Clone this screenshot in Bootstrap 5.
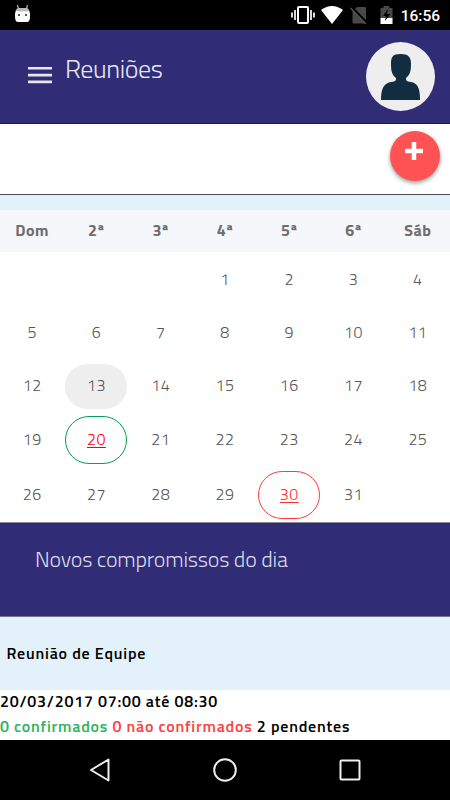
<!DOCTYPE html>
<html lang="pt-BR">
<head>
<meta charset="utf-8">
<meta name="viewport" content="width=device-width, initial-scale=1">
<title>Reuniões</title>
<link href="https://cdn.jsdelivr.net/npm/bootstrap@5.3.0/dist/css/bootstrap.min.css" rel="stylesheet">
<style>
body{font-family:"Titillium Web",Roboto,"Liberation Sans",sans-serif;width:450px;height:800px;overflow:hidden;line-height:1;background:#fff;color:#000}
svg{display:block;flex:none}
.status{height:30px;background:#000;color:#fff;font:500 15.5px/30px Roboto,sans-serif;padding:0 10px 0 14px}
.clock{padding-top:1px}
.topbar{height:94px;background:#302c75;border-bottom:1px solid #18136b;padding:0 15px 0 28px}
.screen-title{font-size:26px;font-weight:300;color:#e6e6f2;margin:0 0 16px 13px;letter-spacing:-.4px}
.avatar{width:69px;height:69px;background:#eee;border-radius:50%}
.tools{height:71px;border-bottom:1px solid #4c484b;padding:7px 10px 0 0}
.add{width:50px;height:50px;padding:0 2px 10px 0;background:#ff5252;border:0;border-radius:50%;box-shadow:0 2px 4px #0006}
.strip{height:15px;background:#e3f2fa}
.week{display:grid;grid-template-columns:repeat(7,1fr);text-align:center;align-items:center;justify-items:center}
.weekdays{height:42px;padding-bottom:2px;background:#f5f7fa;color:#6e6e6e;font-weight:700;font-size:16px;letter-spacing:.5px}
.day{width:62px;height:45px;padding:0 0 2px;display:flex;align-items:center;justify-content:center;font-size:16px;font-weight:300;color:#555;letter-spacing:.5px;border-radius:23px}
.today{background:#eee}
.marked{height:48px;border:1px solid #00a05a;border-radius:24px;color:red;text-decoration:underline;text-underline-offset:2px}
.refused{border-color:#ff3b3b;color:#ff3030}
.h55{height:55px}.h52{height:52px}.h54{height:54px}
.banner{height:95px;background:#302c75;border-top:1px solid #88868f;border-bottom:1px solid #77747d;color:#d9d9ea;padding:25px 0 0 35px;font-size:22px;font-weight:300;letter-spacing:-.2px}
.meeting{height:73px;background:#e3f2fa;padding:0 6.5px 2px;font-size:16px;font-weight:600;letter-spacing:.8px}
.details{height:50px;font-size:16px;line-height:25px;font-weight:600;letter-spacing:.78px;white-space:nowrap}
.when,.answers{height:25px;line-height:23px}
.yes{color:#30b35a}.no{color:#ff4040}
.navkeys{height:60px;background:#000;padding:0 88px}
</style>
<script src="https://cdn.jsdelivr.net/npm/bootstrap@5.3.0/dist/js/bootstrap.bundle.min.js"></script>
</head>
<body class="d-flex flex-column">
<div class="status d-flex align-items-center">
  <svg width="17" height="20" viewBox="0 0 17 20"><path d="M3.500 0l1.500 6M13.500 0l-1.500 6" stroke="#aaa" stroke-width="1.300"/><path d="M2 5h13q1 2 1 6 0 6-3 6H4q-3 0-3-6 0-4 1-6z" fill="#fff"/><path d="M2 6q0-3 3-3h7q3 0 3 3-6 1-13 0z" fill="#bbb"/><path d="M4 9h2v2H4zM11 9h2v2h-2z" fill="#555"/></svg>
  <svg class="ms-auto" width="24" height="20" viewBox="0 0 24 20"><rect x="7" y="2" width="10" height="16" rx="1" fill="none" stroke="#fff" stroke-width="2"/><path d="M4 5v10M20 5v10M1 7.500v5M23 7.500v5" stroke="#fff" stroke-width="1.700"/></svg>
  <svg class="ms-1" width="26" height="20" viewBox="0 0 26 20"><path d="M2 5Q13-3 24 5L13 19z" fill="#fff"/></svg>
  <svg class="ms-1 me-1" width="20" height="20" viewBox="0 0 20 20"><path d="M8 2h8q1 0 1 1v14.500q0 1-1 1H4.500q-1 0-1-1V6.500z" fill="#484848"/><path d="M2 2l18 18" stroke="#000" stroke-width="3"/><path d="M1.500 3l15.500 16" stroke="#555" stroke-width="1.300"/></svg>
  <svg class="ms-1 me-1" width="20" height="20" viewBox="0 0 20 20"><path d="M3.500 3h3V1h6v2h3v11h-12z" fill="#484848"/><path d="M3.500 13h12v6h-12z" fill="#fff"/><path d="M11 4l-5 7h3L8 16l5.500-7H10z" fill="#000"/></svg>
  <span class="clock">16:56</span>
</div>
<header class="topbar d-flex align-items-center">
  <svg width="24" height="18" viewBox="0 0 24 18" class="mb-1"><path d="M0 2.300h24M0 9.100h24M0 15.900h24" stroke="#e6e6ed" stroke-width="2.600"/></svg>
  <h1 class="screen-title">Reuniões</h1>
  <div class="avatar ms-auto">
    <svg width="69" height="69" viewBox="0 0 69 69"><path d="M34.500 12c8 0 10.500 3 10.500 10 0 7-1 11-5 14v2c1 1 2.500 2 5 2 6 1 9 5 9 18H15c0-13 4-17 10-18 2.500 0 4-1 5-2v-2c-4-3-5-7-5-14 0-7 1.500-10 9.500-10z" fill="#122c40"/></svg>
  </div>
</header>
<div class="tools d-flex justify-content-end align-items-start">
  <button class="add btn d-flex align-items-center justify-content-center" aria-label="Adicionar"><svg width="18" height="18" viewBox="0 0 18 18"><path d="M9 0v18M0 9h18" stroke="#fff" stroke-width="4.500"/></svg></button>
</div>
<div class="strip"></div>
<div class="week weekdays"><span>Dom</span><span>2ª</span><span>3ª</span><span>4ª</span><span>5ª</span><span>6ª</span><span>Sáb</span></div>
<div class="week h55"><span></span><span></span><span></span><span class="day">1</span><span class="day">2</span><span class="day">3</span><span class="day">4</span></div>
<div class="week h52"><span class="day">5</span><span class="day">6</span><span class="day">7</span><span class="day">8</span><span class="day">9</span><span class="day">10</span><span class="day">11</span></div>
<div class="week h54"><span class="day">12</span><span class="day today">13</span><span class="day">14</span><span class="day">15</span><span class="day">16</span><span class="day">17</span><span class="day">18</span></div>
<div class="week h54"><span class="day">19</span><a class="day marked">20</a><span class="day">21</span><span class="day">22</span><span class="day">23</span><span class="day">24</span><span class="day">25</span></div>
<div class="week h55"><span class="day">26</span><span class="day">27</span><span class="day">28</span><span class="day">29</span><a class="day marked refused">30</a><span class="day">31</span><span></span></div>
<div class="banner">Novos compromissos do dia</div>
<div class="meeting d-flex align-items-center">Reunião de Equipe</div>
<div class="details"><div class="when">20/03/2017 07:00 até 08:30</div><div class="answers"><span class="yes">0 confirmados</span> <span class="no">0 não confirmados</span> 2 pendentes</div></div>
<nav class="navkeys d-flex align-items-center justify-content-between">
  <svg width="24" height="26" viewBox="0 0 24 26"><path d="M20.500 2.500v21L3 13z" fill="none" stroke="#eee" stroke-width="2" stroke-linejoin="round"/></svg>
  <svg width="26" height="26" viewBox="0 0 26 26"><circle cx="13" cy="13" r="10.800" fill="none" stroke="#eee" stroke-width="2"/></svg>
  <svg width="24" height="24" viewBox="0 0 24 24"><rect x="2.500" y="2.500" width="19" height="19" rx="1" fill="none" stroke="#eee" stroke-width="2"/></svg>
</nav>
</body>
</html>
